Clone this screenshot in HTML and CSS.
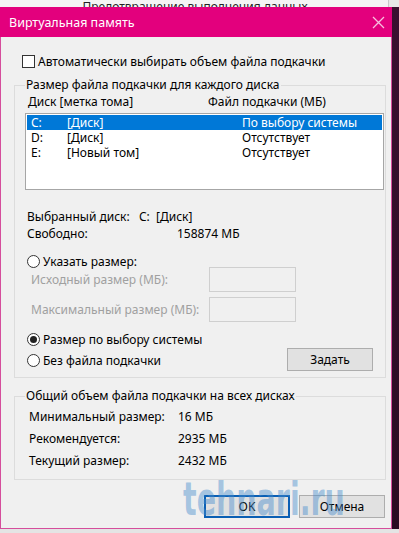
FILE: index.html
```html
<!DOCTYPE html>
<html lang="ru">
<head>
    <meta charset="UTF-8">
    <title>Виртуальная память</title>
    <link rel="stylesheet" href="styles.css">
</head>
<body>
    <div class="desk">
        <div class="behind">
            <span class="behind-text">Предотвращение выполнения данных</span>
        </div>
        <div class="desk-row">
            <div class="dialog">
                <div class="titlebar">
                    <span class="title">Виртуальная память</span>
                    <svg class="close" width="13" height="13" viewBox="0 0 13 13">
                        <path d="M1 1 L12 12 M12 1 L1 12" stroke="#f6c0de" stroke-width="1.3" fill="none"/>
                    </svg>
                </div>
                <div class="content">
                    <label class="check-row">
                        <span class="checkbox"></span>
                        Автоматически выбирать объем файла подкачки
                    </label>

                    <fieldset class="group group-disks">
                        <legend>Размер файла подкачки для каждого диска</legend>
                        <div class="list-head">
                            <span class="col-disk">Диск [метка тома]</span>
                            <span>Файл подкачки (МБ)</span>
                        </div>
                        <div class="listbox">
                            <div class="list-row selected">
                                <span class="col-letter">C:</span>
                                <span class="col-label">[Диск]</span>
                                <span>По выбору системы</span>
                            </div>
                            <div class="list-row">
                                <span class="col-letter">D:</span>
                                <span class="col-label">[Диск]</span>
                                <span>Отсутствует</span>
                            </div>
                            <div class="list-row">
                                <span class="col-letter">E:</span>
                                <span class="col-label">[Новый том]</span>
                                <span>Отсутствует</span>
                            </div>
                        </div>

                        <div class="info">
                            <div class="info-row">
                                <span class="info-key">Выбранный диск:</span>
                                <span>C:&nbsp; [Диск]</span>
                            </div>
                            <div class="info-row">
                                <span class="info-key">Свободно:</span>
                                <span class="free">158874 МБ</span>
                            </div>
                        </div>

                        <div class="radio-row radio-custom">
                            <span class="radio"></span>
                            Указать размер:
                        </div>
                        <div class="size-row size-first">
                            <span class="size-label">Исходный размер (МБ):</span>
                            <span class="size-input"></span>
                        </div>
                        <div class="size-row">
                            <span class="size-label">Максимальный размер (МБ):</span>
                            <span class="size-input"></span>
                        </div>

                        <div class="choice">
                            <div class="choice-radios">
                                <div class="radio-row">
                                    <span class="radio checked"></span>
                                    Размер по выбору системы
                                </div>
                                <div class="radio-row">
                                    <span class="radio"></span>
                                    Без файла подкачки
                                </div>
                            </div>
                            <button class="btn btn-set">Задать</button>
                        </div>
                    </fieldset>

                    <fieldset class="group group-total">
                        <legend>Общий объем файла подкачки на всех дисках</legend>
                        <div class="total-row">
                            <span class="total-key">Минимальный размер:</span>
                            <span>16 МБ</span>
                        </div>
                        <div class="total-row">
                            <span class="total-key">Рекомендуется:</span>
                            <span>2935 МБ</span>
                        </div>
                        <div class="total-row">
                            <span class="total-key">Текущий размер:</span>
                            <span>2432 МБ</span>
                        </div>
                    </fieldset>

                    <div class="buttons">
                        <button class="btn btn-ok">OK</button>
                        <button class="btn">Отмена</button>
                        <span class="watermark">tehnari.ru</span>
                    </div>
                </div>
            </div>
            <div class="side"></div>
        </div>
        <div class="under"></div>
    </div>
</body>
</html>
```

FILE: styles.css
```css
body {
    margin: 0;
    padding: 0;
    font-family: 'Noto Sans', 'Open Sans', sans-serif;
    font-size: 12px;
    color: #000;
    background: #e8e8e8;
}

.desk {
    width: 399px;
    height: 533px;
    overflow: hidden;
    display: flex;
    flex-direction: column;
}

.behind {
    height: 7px;
    flex-shrink: 0;
    overflow: hidden;
    background: #f4f4f4;
    border-right: 1px solid #c8c8c8;
    margin-right: 10px;
    display: flex;
    justify-content: center;
    align-items: flex-end;
}

.behind-text {
    font-size: 12px;
    line-height: 12px;
    margin-bottom: -6px;
    padding-left: 2px;
    color: #222;
}

.desk-row {
    display: flex;
    flex-shrink: 0;
}

.side {
    flex: 1;
    background: linear-gradient(180deg, #3a1030 0%, #2a0c22 100%);
}

.under {
    flex: 1;
    background: #e4e4e4;
}

.dialog {
    width: 390px;
    border: 1px solid #d54d9c;
    border-top: none;
    background: #f0f0f0;
}

.titlebar {
    height: 30px;
    background: #e3007d;
    display: flex;
    align-items: center;
    justify-content: space-between;
    padding: 0 7px 0 9px;
    margin: 0 -1px;
}

.title {
    color: #fff;
    font-size: 12.5px;
}

.close {
    margin-top: 1px;
}

.content {
    padding: 16px 5px 10px 13px;
}

.check-row {
    display: flex;
    align-items: center;
    gap: 3px;
    margin-left: 8px;
    height: 16px;
}

.checkbox {
    width: 11px;
    height: 11px;
    border: 1px solid #333;
    background: #fff;
}

.group {
    border: 1px solid #dcdcdc;
    margin: 0;
    padding: 0 0 0 10px;
    min-width: 0;
}

.group legend {
    padding: 0 1px;
    margin-left: 0;
    line-height: 14px;
}

.group-disks {
    margin-top: 9px;
    padding-bottom: 6px;
}

.list-head {
    display: flex;
    height: 18px;
    align-items: center;
    padding-left: 3px;
}

.col-disk {
    width: 180px;
}

.listbox {
    margin-top: 3px;
    height: 77px;
    width: 359px;
    box-sizing: border-box;
    background: #fff;
    border: 1px solid #a6a6a6;
    padding-top: 1px;
}

.list-row {
    display: flex;
    height: 15px;
    align-items: center;
    padding-left: 4px;
    margin: 0 1px;
}

.list-row.selected {
    background: #0078d7;
    color: #fff;
}

.col-letter {
    width: 36px;
}

.col-label {
    width: 175px;
}

.info {
    margin-top: 18px;
    padding-left: 2px;
}

.info-row {
    display: flex;
    height: 17px;
    align-items: center;
}

.info-key {
    width: 112px;
}

.free {
    margin-left: 38px;
}

.radio-row {
    display: flex;
    align-items: center;
    gap: 3px;
    height: 21px;
    padding-left: 2px;
}

.radio-custom {
    height: 16px;
    margin-top: 11px;
}

.radio {
    width: 11px;
    height: 11px;
    border: 1px solid #333;
    border-radius: 50%;
    background: #fff;
    display: flex;
    align-items: center;
    justify-content: center;
}

.radio.checked::after {
    content: '';
    width: 7px;
    height: 7px;
    border-radius: 50%;
    background: #222;
}

.size-row {
    display: flex;
    align-items: center;
    height: 30px;
    padding-left: 6px;
    color: #a0a0a0;
}

.size-first {
    margin-top: -5px;
}

.size-label {
    width: 178px;
}

.size-input {
    width: 85px;
    height: 23px;
    border: 1px solid #cfcfcf;
}

.choice {
    display: flex;
    align-items: flex-end;
    margin-top: 5px;
}

.choice-radios {
    width: 262px;
}

.btn {
    font-family: inherit;
    font-size: 12px;
    width: 86px;
    height: 23px;
    background: #e1e1e1;
    border: 1px solid #adadad;
    padding: 0;
    color: #000;
}

.group-total {
    margin-top: 11px;
    padding-bottom: 8px;
}

.total-row {
    display: flex;
    height: 22px;
    align-items: center;
    padding-left: 4px;
}

.group-total legend + .total-row {
    margin-top: 2px;
}

.total-key {
    width: 149px;
}

.buttons {
    position: relative;
    display: flex;
    justify-content: flex-end;
    gap: 9px;
    margin-top: 15px;
    padding-right: 1px;
}

.btn-ok {
    border: 2px solid #0a5fb4;
}

.watermark {
    position: absolute;
    left: 169px;
    top: -19px;
    font-family: 'DejaVu Sans', sans-serif;
    font-weight: bold;
    font-size: 46px;
    line-height: 46px;
    transform: scale(0.62, 1);
    transform-origin: left top;
    color: rgba(70, 140, 205, 0.45);
    pointer-events: none;
}
```
